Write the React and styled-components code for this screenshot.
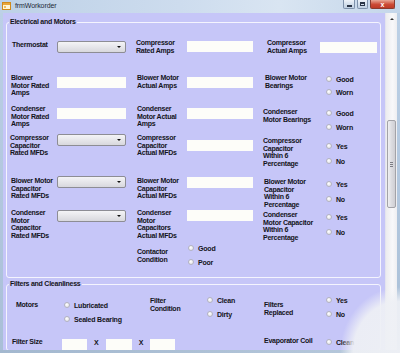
import React from 'react';
import styled, { createGlobalStyle } from 'styled-components';

const GlobalStyle = createGlobalStyle`
  html, body {
    margin: 0;
    padding: 0;
  }
  body {
    width: 400px;
    height: 353px;
    overflow: hidden;
    background: #a9bdd3;
    font-family: "Liberation Sans", Arial, sans-serif;
  }
`;

const Window = styled.div`
  position: relative;
  width: 400px;
  height: 353px;
  display: flex;
  flex-direction: column;
  overflow: hidden;
  background: #b6c9de;
`;

const TitleBar = styled.div`
  height: 13px;
  flex: none;
  display: flex;
  align-items: flex-start;
  padding: 0 5px 0 2px;
  background: linear-gradient(90deg, #bdd1e7 0%, #cddcee 45%, #d9e5f2 70%, #c4d6ea 100%);
`;

const TitleIcon = styled.svg`
  margin-top: 2px;
  flex: none;
`;

const TitleText = styled.span`
  margin-left: 4px;
  font-size: 7px;
  line-height: 12px;
  color: #1d2838;
  letter-spacing: -0.1px;
`;

const Caption = styled.div`
  margin-left: auto;
  display: flex;
  gap: 2px;
`;

const CaptionButton = styled.div`
  width: ${(p) => p.$w}px;
  height: 9px;
  box-sizing: border-box;
  display: flex;
  align-items: center;
  justify-content: center;
  border: 1px solid ${(p) => (p.$close ? '#8a3b30' : '#7f92ab')};
  border-top: none;
  border-radius: 0 0 2px 2px;
  background: ${(p) =>
    p.$close
      ? 'linear-gradient(#e8a796, #cc4a36 55%, #bd3a27)'
      : 'linear-gradient(#eef3f9, #d3dfec 55%, #c0d0e3)'};
  color: ${(p) => (p.$close ? '#fff' : '#2a3547')};
  font-size: 7px;
  font-weight: 700;
  line-height: 1;
`;

const MinGlyph = styled.span`
  width: 5px;
  height: 2px;
  margin-top: 3px;
  background: #2a3547;
`;

const MaxGlyph = styled.span`
  width: 5px;
  height: 4px;
  box-sizing: border-box;
  border: 1px solid #2a3547;
  border-top-width: 2px;
`;

const Body = styled.div`
  height: 337px;
  flex: none;
  display: flex;
`;

const SideFrame = styled.div`
  width: 3px;
  flex: none;
  background: linear-gradient(#bcd0e6, #a9bfd7);
`;

const Client = styled.div`
  flex: 1;
  min-width: 0;
  padding: 5px 4px 0 3px;
  background: #c6c6f8;
  overflow: hidden;
`;

const ScrollBar = styled.div`
  width: 12px;
  flex: none;
  box-sizing: border-box;
  display: flex;
  flex-direction: column;
  align-items: center;
  border-left: 1px solid #e4e4ee;
  background: linear-gradient(90deg, #ececef, #f8f8fa 60%, #eeeef1);
`;

const ScrollArrow = styled.div`
  margin-top: 5px;
  width: 0;
  height: 0;
  border-left: 2px solid transparent;
  border-right: 2px solid transparent;
  border-bottom: 2px solid #333;
`;

const ScrollThumb = styled.div`
  margin-top: 100px;
  width: 9px;
  height: 88px;
  box-sizing: border-box;
  border: 1px solid #a3a3a8;
  border-radius: 2px;
  background: linear-gradient(90deg, #f0f0f2, #dcdce0 50%, #cfcfd4);
  display: flex;
  flex-direction: column;
  align-items: center;
  justify-content: center;
  gap: 1px;
`;

const Grip = styled.span`
  width: 3px;
  height: 1px;
  background: #7d7d84;
`;

const BottomFrame = styled.div`
  height: 3px;
  flex: none;
  background: linear-gradient(90deg, #a3b8cf, #b7c9dc);
`;

const Glare = styled.div`
  position: absolute;
  right: 0;
  bottom: 0;
  width: 80px;
  height: 80px;
  pointer-events: none;
  background: radial-gradient(
    ellipse 60px 66px at 100% 100%,
    rgba(238, 240, 245, 0.97) 0%,
    rgba(238, 240, 245, 0.93) 78%,
    rgba(238, 240, 245, 0) 100%
  );
`;

const GroupBox = styled.fieldset`
  margin: ${(p) => p.$mt || 0}px 0 0 0;
  padding: ${(p) => p.$pt}px 3px 0 3px;
  min-width: 0;
  border: 1px solid rgba(255, 255, 255, 0.8);
  border-radius: 3px;
  display: grid;
  grid-template-columns: ${(p) => p.$cols};
  grid-template-rows: ${(p) => p.$rows};
  align-items: start;
`;

const GroupTitle = styled.legend`
  padding: 0 1px;
  margin-left: -1px;
  font-size: 7px;
  font-weight: 700;
  line-height: 8px;
  letter-spacing: -0.25px;
  color: #141420;
`;

const Label = styled.div`
  margin-top: ${(p) => p.$dy || 0}px;
  padding-left: ${(p) => p.$px || 0}px;
  font-size: 7px;
  font-weight: 700;
  line-height: 7.6px;
  letter-spacing: -0.25px;
  white-space: nowrap;
  color: #141420;
`;

const TextBox = styled.input`
  display: block;
  margin: ${(p) => p.$dy || 0}px 0 0 0;
  padding: 0;
  width: ${(p) => p.$w}px;
  height: 11px;
  box-sizing: border-box;
  border: none;
  outline: none;
  background: #fdfdf9;
`;

const ComboBox = styled.div`
  margin-top: ${(p) => p.$dy || 0}px;
  width: 69px;
  height: 12px;
  box-sizing: border-box;
  display: flex;
  align-items: center;
  justify-content: flex-end;
  padding-right: 4px;
  border: 1px solid #8d8d94;
  border-radius: 2px;
  background: linear-gradient(#f4f4f6, #e6e6ea 50%, #d8d8dd);
`;

const ComboArrow = styled.span`
  width: 0;
  height: 0;
  border-left: 2px solid transparent;
  border-right: 2px solid transparent;
  border-top: 2px solid #111;
`;

const RadioList = styled.div`
  margin-top: ${(p) => p.$dy || 0}px;
  padding-left: ${(p) => p.$px || 0}px;
  display: flex;
  flex-direction: column;
  gap: ${(p) => p.$gap}px;
`;

const RadioItem = styled.label`
  display: flex;
  align-items: center;
  gap: 4px;
  height: 7px;
  font-size: 7px;
  font-weight: 700;
  letter-spacing: -0.2px;
  white-space: nowrap;
  color: #141420;
`;

const RadioDot = styled.span`
  width: 6px;
  height: 6px;
  flex: none;
  box-sizing: border-box;
  border-radius: 50%;
  border: 1px solid #b4b4c0;
  background: radial-gradient(circle at 40% 35%, #ffffff, #dedee4);
`;

const SizeRow = styled.div`
  grid-column: 2 / 5;
  margin: 1px 0 0 -2px;
  display: flex;
  align-items: flex-start;
  gap: 7px;
`;

const Times = styled.span`
  font-size: 7px;
  font-weight: 700;
  line-height: 7.6px;
  color: #141420;
`;

const Radios = ({ options, dy, gap, px = 6 }) => (
  <RadioList $dy={dy} $gap={gap} $px={px}>
    {options.map((o) => (
      <RadioItem key={o}>
        <RadioDot />
        {o}
      </RadioItem>
    ))}
  </RadioList>
);

const Lines = ({ text, dy, px }) => (
  <Label $dy={dy} $px={px}>
    {text.split('|').map((t, i) => (
      <React.Fragment key={i}>
        {i > 0 && <br />}
        {t}
      </React.Fragment>
    ))}
  </Label>
);

const Combo = ({ dy }) => (
  <ComboBox $dy={dy}>
    <ComboArrow />
  </ComboBox>
);

export default function App() {
  return (
    <>
      <GlobalStyle />
      <Window>
        <TitleBar>
          <TitleIcon width="9" height="8" viewBox="0 0 9 8">
            <rect x="0.5" y="0.5" width="8" height="7" fill="#fff6d8" stroke="#d08a1c" />
            <rect x="1" y="1" width="7" height="2" fill="#e9a63a" />
            <rect x="2" y="4" width="2" height="2" fill="#f0c060" />
          </TitleIcon>
          <TitleText>frmWorkorder</TitleText>
          <Caption>
            <CaptionButton $w={12}>
              <MinGlyph />
            </CaptionButton>
            <CaptionButton $w={11}>
              <MaxGlyph />
            </CaptionButton>
            <CaptionButton $w={25} $close>
              x
            </CaptionButton>
          </Caption>
        </TitleBar>

        <Body>
          <SideFrame />
          <Client>
            <GroupBox
              $pt={13}
              $cols="47px 79px 51px 76px 57px 1fr"
              $rows="35px 31px 29px 43px 32px 36px 32px"
            >
              <GroupTitle>Electrical and Motors</GroupTitle>

              <Lines text="Thermostat" dy={2} px={2} />
              <Combo dy={2} />
              <Lines text="Compressor|Rated Amps" px={0} />
              <TextBox $w={66} $dy={2} />
              <Lines text="Compressor|Actual Amps" px={4} />
              <TextBox $w={57} $dy={3} />

              <Lines text="Blower|Motor Rated|Amps" px={1} />
              <TextBox $w={69} $dy={3} />
              <Lines text="Blower Motor|Actual Amps" px={1} />
              <TextBox $w={66} $dy={3} />
              <Lines text="Blower Motor|Bearings" px={2} />
              <Radios options={['Good', 'Worn']} dy={1.5} gap={6} />

              <Lines text="Condenser|Motor Rated|Amps" px={1} />
              <TextBox $w={69} $dy={3} />
              <Lines text="Condenser|Motor Actual|Amps" px={1} />
              <TextBox $w={66} $dy={3} />
              <Lines text="Condenser|Motor Bearings" dy={3} px={0} />
              <Radios options={['Good', 'Worn']} dy={4.5} gap={7} />

              <Lines text="Compressor|Capacitor|Rated MFDs" px={0} />
              <Combo dy={0} />
              <Lines text="Compressor|Capacitor|Actual MFDs" px={1} />
              <TextBox $w={66} $dy={6} />
              <Lines text="Compressor|Capacitor|Within 6|Percentage" dy={3} px={0} />
              <Radios options={['Yes', 'No']} dy={8.5} gap={8} />

              <Lines text="Blower Motor|Capacitor|Rated MFDs" px={1} />
              <Combo dy={-1} />
              <Lines text="Blower Motor|Capacitor|Actual MFDs" px={1} />
              <TextBox $w={66} $dy={0} />
              <Lines text="Blower Motor|Capacitor|Within 6|Percentage" dy={1} px={1} />
              <Radios options={['Yes', 'No']} dy={3.5} gap={8} />

              <Lines text="Condenser|Motor|Capacitor|Rated MFDs" px={1} />
              <Combo dy={1} />
              <Lines text="Condenser|Motor|Capacitors|Actual MFDs" px={1} />
              <TextBox $w={66} $dy={1} />
              <Lines text="Condenser|Motor Capacitor|Within 6|Percentage" dy={2} px={0} />
              <Radios options={['Yes', 'No']} dy={4.5} gap={8} />

              <span />
              <span />
              <Lines text="Contactor|Condition" dy={3} px={1} />
              <Radios options={['Good', 'Poor']} dy={-0.5} gap={7} px={1} />
            </GroupBox>

            <GroupBox
              $mt={2}
              $pt={8}
              $cols="54px 86px 57px 57px 62px 1fr"
              $rows="42px 12px"
            >
              <GroupTitle>Filters and Cleanliness</GroupTitle>

              <Lines text="Motors" dy={5} px={6} />
              <Radios options={['Lubricated', 'Sealed Bearing']} dy={5.5} gap={7} px={0} />
              <Lines text="Filter|Condition" dy={1} />
              <Radios options={['Clean', 'Dirty']} dy={0.5} gap={7} px={0} />
              <Lines text="Filters|Replaced" dy={5} />
              <Radios options={['Yes', 'No']} dy={0.5} gap={7} px={0} />

              <Lines text="Filter Size" px={2} />
              <SizeRow>
                <TextBox $w={25} />
                <Times>X</Times>
                <TextBox $w={26} />
                <Times>X</Times>
                <TextBox $w={25} />
              </SizeRow>
              <Lines text="Evaporator Coil" dy={-1} />
              <Radios options={['Clean']} dy={0.5} gap={7} px={0} />
            </GroupBox>
          </Client>
          <ScrollBar>
            <ScrollArrow />
            <ScrollThumb>
              <Grip />
              <Grip />
              <Grip />
            </ScrollThumb>
          </ScrollBar>
          <SideFrame />
        </Body>
        <BottomFrame />
        <Glare />
      </Window>
    </>
  );
}
